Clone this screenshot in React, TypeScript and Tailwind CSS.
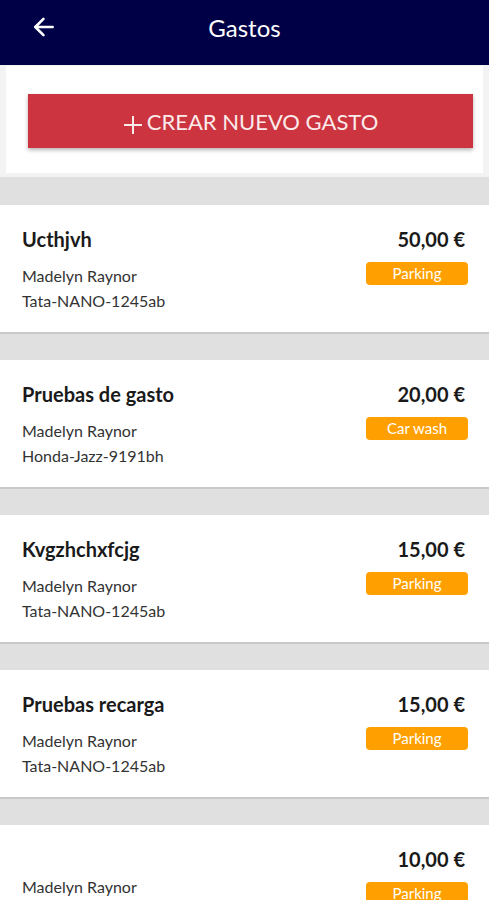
import React from "react";

interface Expense {
  title: string;
  driver: string;
  vehicle: string;
  amount: string;
  category: string;
}

const expenses: Expense[] = [
  { title: "Ucthjvh", driver: "Madelyn Raynor", vehicle: "Tata-NANO-1245ab", amount: "50,00 €", category: "Parking" },
  { title: "Pruebas de gasto", driver: "Madelyn Raynor", vehicle: "Honda-Jazz-9191bh", amount: "20,00 €", category: "Car wash" },
  { title: "Kvgzhchxfcjg", driver: "Madelyn Raynor", vehicle: "Tata-NANO-1245ab", amount: "15,00 €", category: "Parking" },
  { title: "Pruebas recarga", driver: "Madelyn Raynor", vehicle: "Tata-NANO-1245ab", amount: "15,00 €", category: "Parking" },
  { title: "", driver: "Madelyn Raynor", vehicle: "Tata-NANO-1245ab", amount: "10,00 €", category: "Parking" },
];

function ExpenseCard({ expense }: { expense: Expense }) {
  return (
    <div className="mb-[26px] flex justify-between border-b-2 border-[#c9c9c9] bg-white pt-[22px] pb-[19px] pl-[22px] pr-[21px]">
      <div className="flex flex-col">
        {expense.title ? (
          <div className="mb-[12px] text-[20px] font-bold leading-[24px] text-[#1a1a1a]">
            {expense.title}
          </div>
        ) : (
          <div className="h-[27px]" />
        )}
        <div className="text-[16px] leading-[25px] text-[#333333]">{expense.driver}</div>
        <div className="text-[16px] leading-[25px] text-[#333333]">{expense.vehicle}</div>
      </div>
      <div className="flex flex-col items-end">
        <div className="pr-[3px] text-[20px] font-bold leading-[24px] text-[#1a1a1a]">
          {expense.amount}
        </div>
        <div className="mt-[11px] flex h-[23px] w-[102px] items-center justify-center rounded-[4px] bg-[#ffa000] text-[15px] text-white">
          {expense.category}
        </div>
      </div>
    </div>
  );
}

export default function App() {
  return (
    <div className="min-h-[900px] bg-[#e0e0e0] font-['Lato','Liberation_Sans',sans-serif]">
      <header className="relative flex h-[65px] items-center justify-center bg-[#000046] pb-[9px]">
        <button className="absolute left-[31px] top-[14px] text-white">
          <svg width="26" height="26" viewBox="0 0 24 24" fill="none" stroke="currentColor" strokeWidth="2.4" strokeLinecap="round" strokeLinejoin="round">
            <title>Back</title>
            <path d="M20 12H4" />
            <path d="M11.5 4.5 4 12l7.5 7.5" />
          </svg>
        </button>
        <h1 className="text-[24px] font-normal leading-[28px] text-white">Gastos</h1>
      </header>

      <div className="bg-[#f3f3f3] pb-[4px] pt-[1px]">
        <div className="mx-[6px] bg-white pb-[25px] pl-[22px] pr-[10px] pt-[28px]">
          <button className="flex h-[54px] w-full items-center justify-center bg-[#cc3440] text-[22px] text-[#fbeaea] shadow-[0_2px_4px_rgba(0,0,0,0.3)]">
            <svg className="mr-[4px] mt-[8px]" width="20" height="20" viewBox="0 0 20 20" stroke="currentColor" strokeWidth="2">
              <title>Add</title>
              <path d="M10 1v18M1 10h18" />
            </svg>
            CREAR NUEVO GASTO
          </button>
        </div>
      </div>

      <div className="pt-[28px]">
        {expenses.map((e, i) => (
          <ExpenseCard key={i} expense={e} />
        ))}
      </div>
    </div>
  );
}
